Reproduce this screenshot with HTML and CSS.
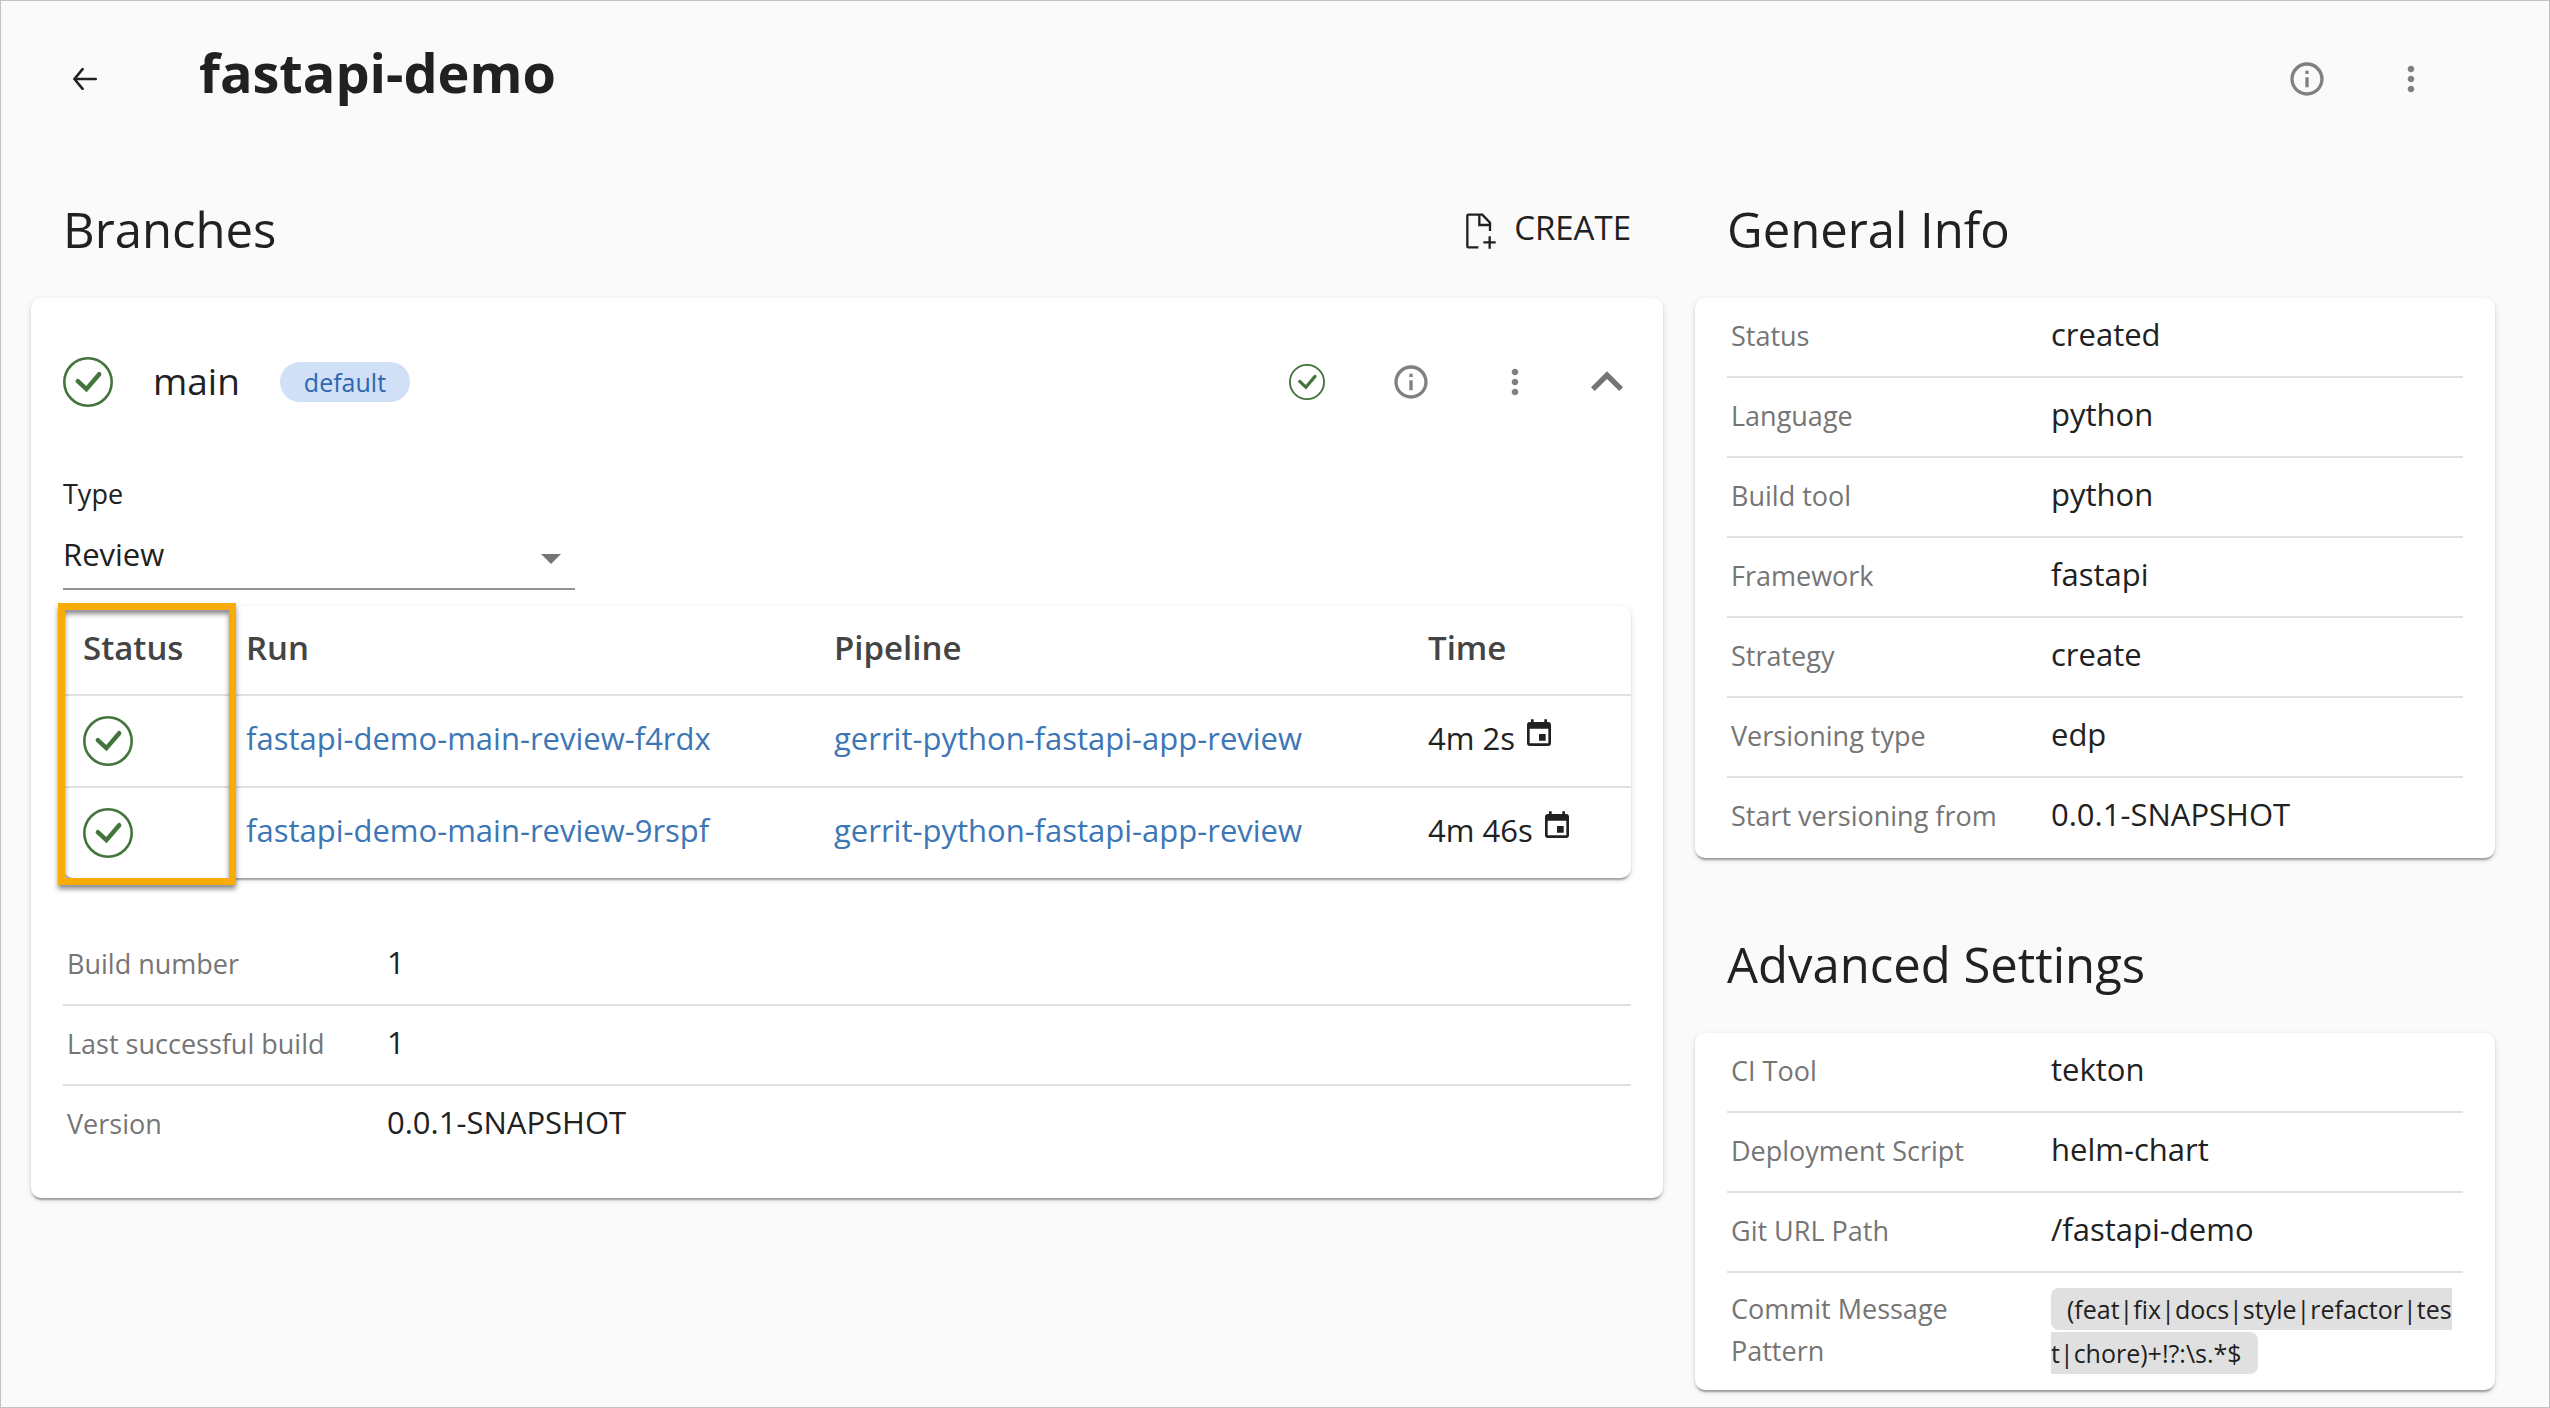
FILE: index.html
```html
<!DOCTYPE html>
<html lang="en">
<head>
<meta charset="utf-8">
<title>fastapi-demo</title>
<link rel="stylesheet" href="styles.css">
</head>
<body>
<svg class="sprite" aria-hidden="true">
  <symbol id="check" viewBox="0 0 50 50"><circle cx="25" cy="25" r="23.7" fill="none" stroke="currentColor" stroke-width="2.6"/><path d="M14.8 24.2 23.4 32.2 36.2 17.2" fill="none" stroke="currentColor" stroke-width="4.4" stroke-linecap="round"/></symbol>
  <symbol id="info" viewBox="0 0 24 24"><path fill="currentColor" d="M11 7h2v2h-2zm0 4h2v6h-2zm1-9C6.48 2 2 6.48 2 12s4.48 10 10 10 10-4.48 10-10S17.52 2 12 2zm0 18c-4.41 0-8-3.59-8-8s3.59-8 8-8 8 3.59 8 8-3.59 8-8 8z"/></symbol>
  <symbol id="more" viewBox="0 0 24 24"><path fill="currentColor" d="M12 8c1.1 0 2-.9 2-2s-.9-2-2-2-2 .9-2 2 .9 2 2 2zm0 2c-1.1 0-2 .9-2 2s.9 2 2 2 2-.9 2-2-.9-2-2-2zm0 6c-1.1 0-2 .9-2 2s.9 2 2 2 2-.9 2-2-.9-2-2-2z"/></symbol>
  <symbol id="calendar" viewBox="0 0 24 24"><path fill="currentColor" d="M17 12h-5v5h5v-5zM16 1v2H8V1H6v2H5c-1.11 0-1.99.9-1.99 2L3 19c0 1.1.89 2 2 2h14c1.1 0 2-.9 2-2V5c0-1.1-.9-2-2-2h-1V1h-2zm3 18H5V8h14v11z"/></symbol>
</svg>

<header class="topbar">
  <button class="icon-button back" type="button" aria-label="Back"><svg width="24" height="22" viewBox="0 0 24 22"><path d="M9.6 1.2 1.4 11 9.6 20.8M1.4 11H22.8" fill="none" stroke="currentColor" stroke-width="2.6" stroke-linecap="round" stroke-linejoin="round"/></svg></button>
  <h1 class="title">fastapi-demo</h1>
  <div class="actions">
    <button class="icon-button" type="button" aria-label="Details"><svg class="icon"><use href="#info"/></svg></button>
    <button class="icon-button" type="button" aria-label="More"><svg class="icon"><use href="#more"/></svg></button>
  </div>
</header>

<main class="columns">
  <section class="main-column">
    <div class="section-head">
      <h2>Branches</h2>
      <button class="create" type="button"><svg width="31" height="36" viewBox="0 0 93 108"><path d="M40 103H10Q7 103 7 100V8Q7 5 10 5H52L75 29V54M43 7V36H75M74 70V107M55 88H92" fill="none" stroke="currentColor" stroke-width="7"/></svg><span>CREATE</span></button>
    </div>
    <article class="card branch">
      <header class="branch-head">
        <svg class="status"><use href="#check"/></svg>
        <h3>main</h3>
        <span class="chip">default</span>
        <div class="actions">
          <button class="icon-button" type="button" aria-label="Build status"><svg class="status-small"><use href="#check"/></svg></button>
          <button class="icon-button" type="button" aria-label="Branch details"><svg class="icon"><use href="#info"/></svg></button>
          <button class="icon-button" type="button" aria-label="Branch menu"><svg class="icon"><use href="#more"/></svg></button>
        </div>
        <button class="icon-button collapse" type="button" aria-label="Collapse"><svg width="64" height="64" viewBox="0 0 24 24"><path fill="currentColor" d="M12 8l-6 6 1.41 1.41L12 10.83l4.59 4.58L18 14z"/></svg></button>
      </header>
      <div class="branch-body">
        <div class="field">
          <label for="type">Type</label>
          <div class="select-wrap">
            <select id="type"><option>Review</option></select>
            <svg class="caret" width="20" height="10" viewBox="0 0 20 10"><path fill="currentColor" d="M0 0h20L10 10z"/></svg>
          </div>
        </div>
        <div class="card runs">
          <table>
            <colgroup><col class="c-status"><col class="c-run"><col class="c-pipeline"><col></colgroup>
            <thead><tr><th>Status</th><th>Run</th><th>Pipeline</th><th>Time</th></tr></thead>
            <tbody>
              <tr><td><svg class="status"><use href="#check"/></svg></td><td><a href="#">fastapi-demo-main-review-f4rdx</a></td><td><a href="#">gerrit-python-fastapi-app-review</a></td><td class="time">4m 2s<svg class="calendar"><use href="#calendar"/></svg></td></tr>
              <tr><td><svg class="status"><use href="#check"/></svg></td><td><a href="#">fastapi-demo-main-review-9rspf</a></td><td><a href="#">gerrit-python-fastapi-app-review</a></td><td class="time">4m 46s<svg class="calendar"><use href="#calendar"/></svg></td></tr>
            </tbody>
          </table>
          <div class="highlight"></div>
        </div>
        <dl class="info">
          <div><dt>Build number</dt><dd>1</dd></div>
          <div><dt>Last successful build</dt><dd>1</dd></div>
          <div><dt>Version</dt><dd>0.0.1-SNAPSHOT</dd></div>
        </dl>
      </div>
    </article>
  </section>

  <aside class="side-column">
    <section>
      <div class="section-head"><h2>General Info</h2></div>
      <div class="card side-card">
        <dl class="info">
          <div><dt>Status</dt><dd>created</dd></div>
          <div><dt>Language</dt><dd>python</dd></div>
          <div><dt>Build tool</dt><dd>python</dd></div>
          <div><dt>Framework</dt><dd>fastapi</dd></div>
          <div><dt>Strategy</dt><dd>create</dd></div>
          <div><dt>Versioning type</dt><dd>edp</dd></div>
          <div><dt>Start versioning from</dt><dd>0.0.1-SNAPSHOT</dd></div>
        </dl>
      </div>
    </section>
    <section>
      <div class="section-head"><h2>Advanced Settings</h2></div>
      <div class="card side-card">
        <dl class="info">
          <div><dt>CI Tool</dt><dd>tekton</dd></div>
          <div><dt>Deployment Script</dt><dd>helm-chart</dd></div>
          <div><dt>Git URL Path</dt><dd>/fastapi-demo</dd></div>
          <div class="pattern"><dt>Commit Message Pattern</dt><dd><code>(feat|fix|docs|style|refactor|tes<wbr>t|chore)+!?:\s.*$</code></dd></div>
        </dl>
      </div>
    </section>
  </aside>
</main>
</body>
</html>
```
FILE: styles.css
```css
* { box-sizing: border-box; }

body {
  margin: 0;
  min-height: 100vh;
  padding: 30px 54px 16px 30px;
  border: 1px solid #c3c3c3;
  background: #fafafa;
  color: #212121;
  font: 31px/42px "Open Sans", sans-serif;
}

h1, h2, h3, dl, dd { margin: 0; }

button, select { font: inherit; color: inherit; border: 0; background: none; padding: 0; }

.sprite { position: absolute; width: 0; height: 0; }

.topbar { display: flex; align-items: center; height: 96px; padding: 0 52px 0 22px; }
.title { margin-left: 82px; padding-bottom: 14px; font-size: 54px; line-height: 72px; font-weight: 700; }

.actions { display: flex; gap: 40px; margin-left: auto; }
.icon-button { display: grid; place-items: center; width: 64px; height: 64px; color: #808080; }
.back { color: #212121; }
.icon { width: 40px; height: 40px; }
.status { display: block; width: 50px; height: 50px; color: #43743c; }
.status-small { width: 36px; height: 36px; color: #43743c; }

.columns { display: grid; grid-template-columns: repeat(12, minmax(0, 1fr)); gap: 32px; margin-top: 36px; }
.main-column { grid-column: span 8; }
.side-column { grid-column: span 4; display: flex; flex-direction: column; gap: 40px; }

.section-head { display: flex; align-items: center; justify-content: space-between; height: 135px; padding: 0 32px; }
.section-head h2 { padding-bottom: 4px; font-size: 49px; line-height: 64px; font-weight: 400; }
.create { display: flex; align-items: center; gap: 18px; font-size: 33px; }
.create span { padding-bottom: 6px; }

.card {
  background: #fff;
  border-radius: 10px;
  box-shadow: 0 4px 2px -2px rgba(0, 0, 0, .2), 0 2px 2px rgba(0, 0, 0, .14), 0 2px 6px rgba(0, 0, 0, .12);
}

.branch-head { display: flex; align-items: center; height: 168px; padding: 0 24px 0 32px; }
.branch-head h3 { margin: 0 40px; padding-bottom: 2px; font-size: 37px; line-height: 56px; font-weight: 400; }
.chip { padding: 0 24px; border-radius: 20px; background: #d0e0f7; color: #2f66b0; font-size: 25px; line-height: 40px; }
.collapse { margin-left: 28px; color: #757575; }

.branch-body { padding: 8px 32px 32px; }
.field { width: 512px; margin-bottom: 16px; font-size: 31px; }
.field label { display: block; margin-bottom: 16px; font-size: 27px; line-height: 40px; }
.select-wrap { position: relative; }
.field select { display: block; width: 100%; height: 60px; padding-bottom: 10px; border-bottom: 2px solid #949494; appearance: none; }
.caret { position: absolute; right: 14px; top: 24px; color: #757575; pointer-events: none; }

.runs { position: relative; margin-bottom: 48px; }
table { width: 100%; border-collapse: separate; border-spacing: 0; table-layout: fixed; }
.c-status { width: 163px; }
.c-run { width: 588px; }
.c-pipeline { width: 594px; }
th, td { padding: 0 20px; text-align: left; }
th { height: 90px; padding-bottom: 4px; border-bottom: 2px solid #e0e0e0; color: #444; font-size: 33px; font-weight: 600; }
td { height: 92px; border-bottom: 2px solid #e0e0e0; }
tbody tr:last-child td { height: 90px; border-bottom: 0; }
td a { display: block; padding-bottom: 6px; color: #3d76b5; text-decoration: none; }
td.time { padding-bottom: 6px; }
.calendar { width: 32px; height: 32px; margin-left: 8px; }
.highlight {
  position: absolute;
  inset: -3px auto -7px -5px;
  width: 178px;
  border: 7px solid #f9ab0a;
  box-shadow: 0 4px 5px rgba(0, 0, 0, .45), inset 0 4px 5px rgba(0, 0, 0, .45);
}

.side-card { padding: 0 32px; }
.info > div { display: grid; grid-template-columns: 320px 1fr; align-items: baseline; align-content: start; min-height: 80px; padding: 15px 0 16px 4px; border-bottom: 2px solid #e0e0e0; }
.info > div:last-child { border-bottom: 0; }
.info > .pattern { padding-top: 13px; }
.info dt { padding-right: 32px; color: #757575; font-size: 27px; }
.info code { padding: 4px 16px; border-radius: 8px; background: #e0e0e0; font: 25px/42px "Open Sans", sans-serif; }
```
